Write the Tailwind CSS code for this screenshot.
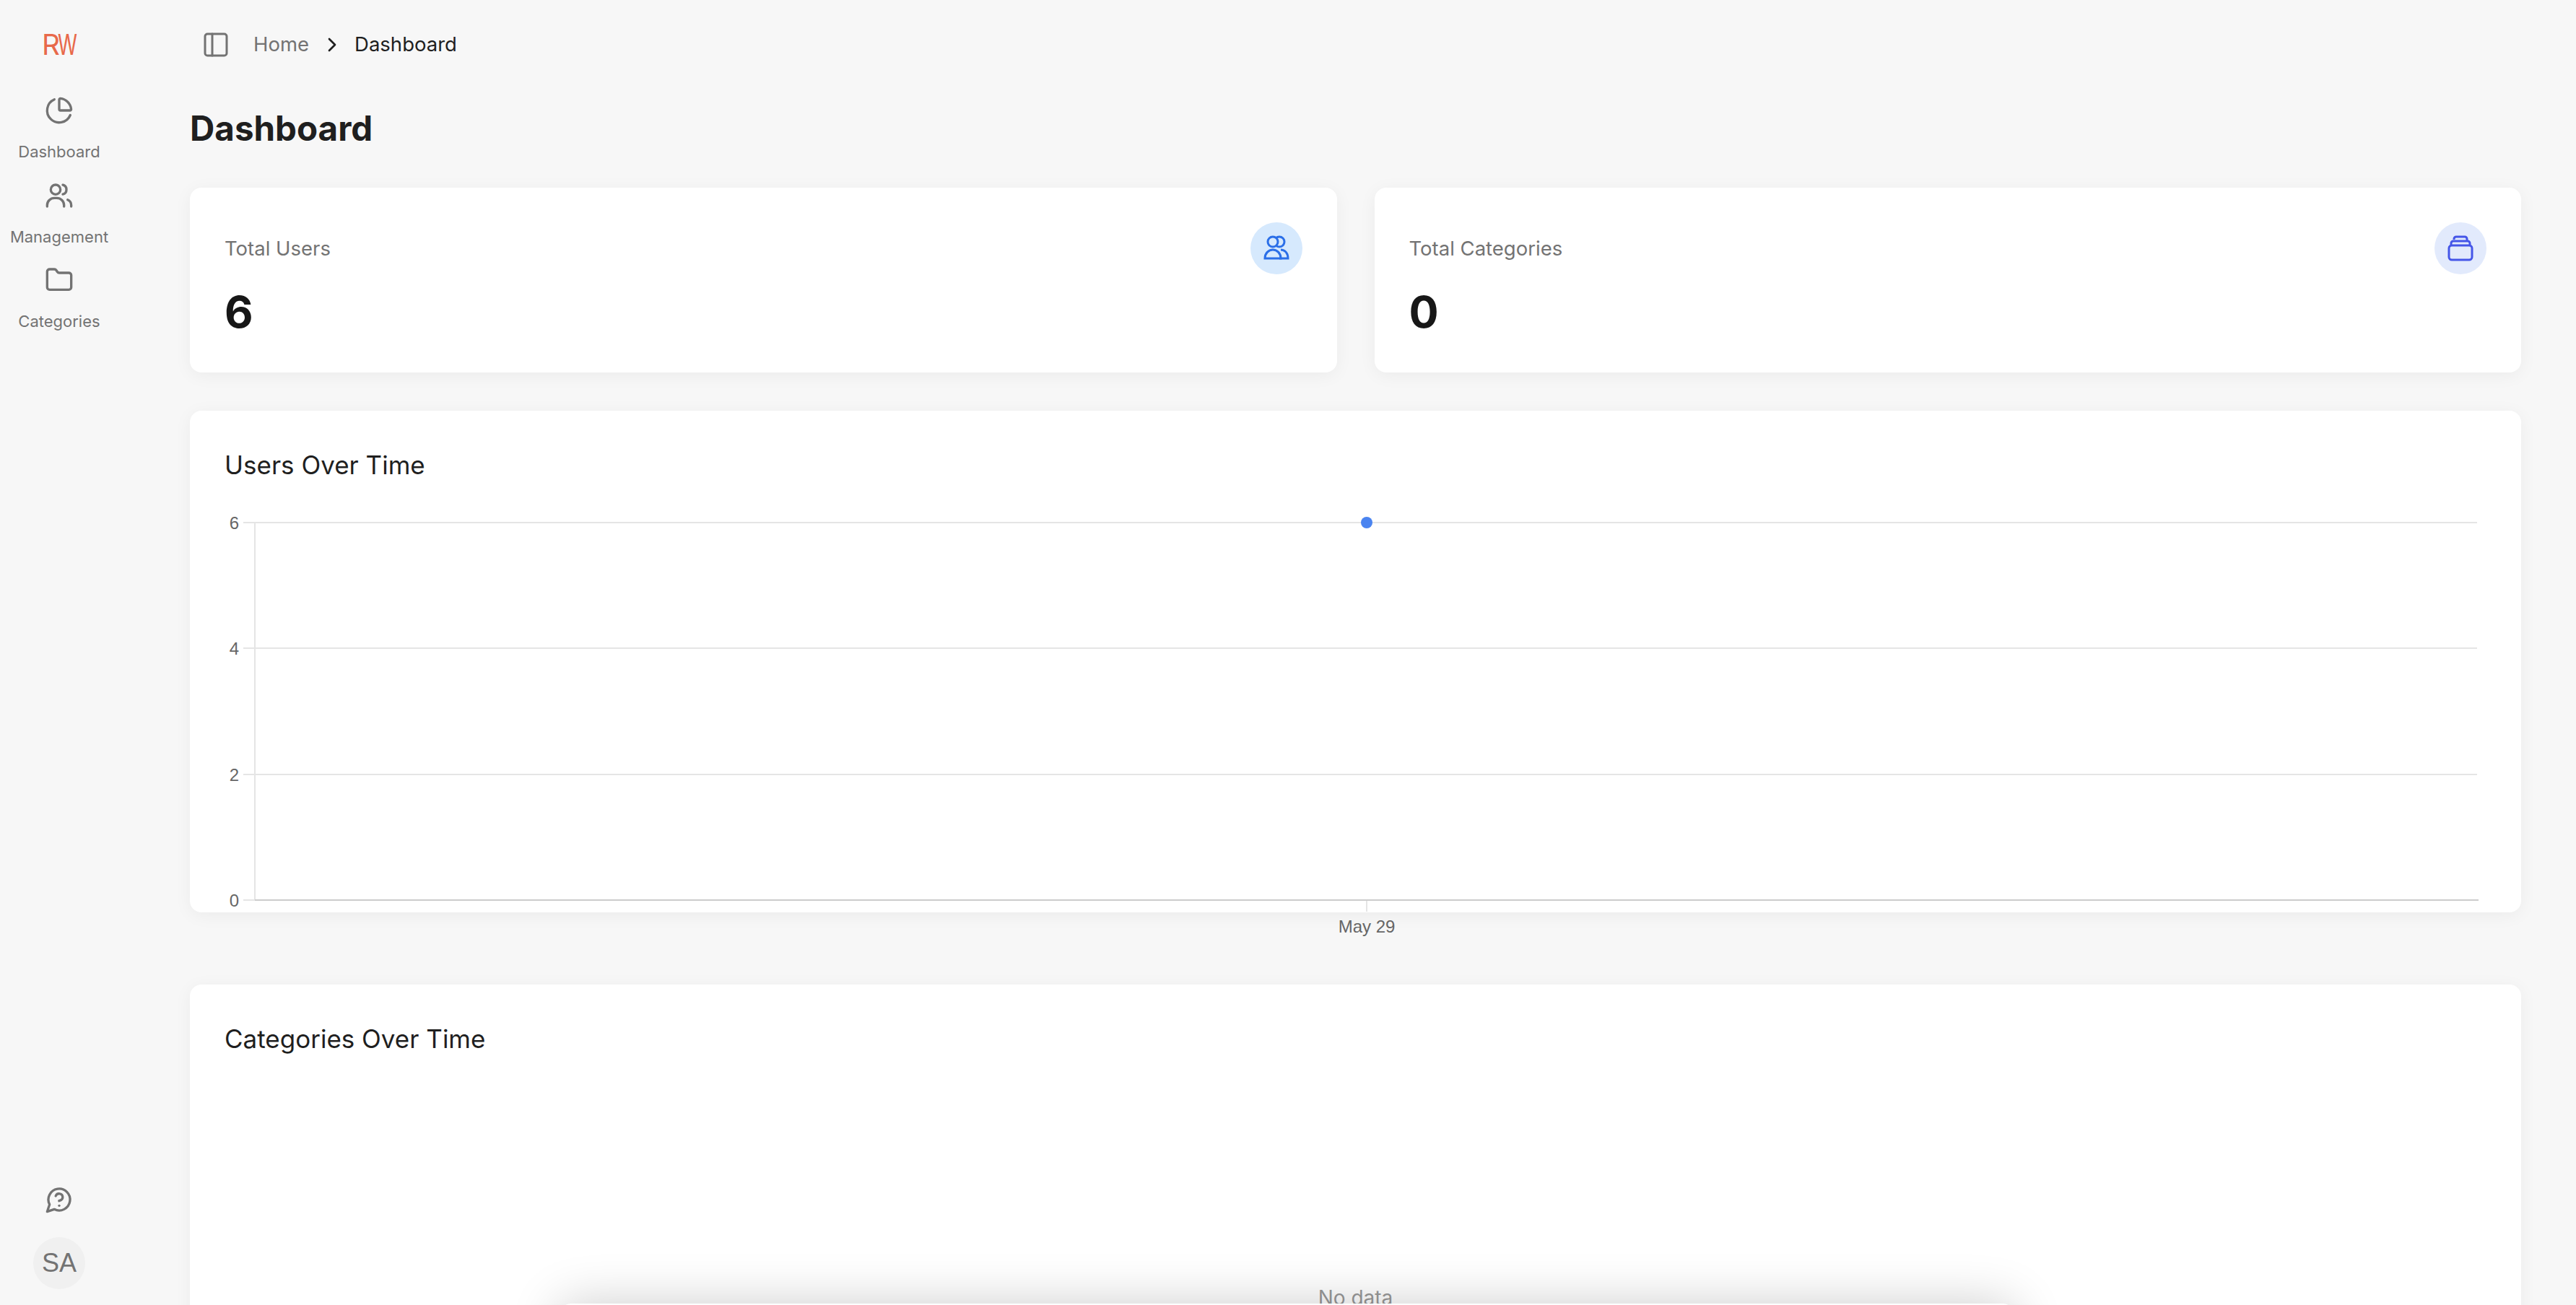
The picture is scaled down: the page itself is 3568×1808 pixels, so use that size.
<!DOCTYPE html>
<html lang="en">
<head>
    <meta charset="UTF-8">
    <meta name="viewport" content="width=device-width, initial-scale=1.0">
    <title>Dashboard</title>
    <script src="https://cdn.jsdelivr.net/npm/@tailwindcss/browser@4"></script>
</head>
<body class="relative flex h-screen overflow-hidden bg-[#f7f7f7] font-[Inter,sans-serif] text-[#1f1f1f]">
    <!-- sidebar -->
    <aside class="flex h-full w-[164px] shrink-0 flex-col items-center pt-[44px] pb-[22px] text-[#737373]">
        <svg class="ml-[2px] h-[34px] w-[50px] overflow-visible" viewBox="0 0 50 34" font-family="Inter, sans-serif" font-size="40" fill="#e8694a"><text x="0" y="32" textLength="25" lengthAdjust="spacingAndGlyphs">R</text><text x="22" y="32" textLength="27" lengthAdjust="spacingAndGlyphs">W</text></svg>
        <nav class="mt-[55px] flex flex-col items-center gap-[28.5px]">
            <a class="flex flex-col items-center gap-[25px]">
                <svg class="h-[40px] w-[40px]" viewBox="0 0 24 24" fill="none" stroke="currentColor" stroke-width="2" stroke-linecap="round" stroke-linejoin="round"><path d="M21 12c.552 0 1.005-.449.95-.998a10 10 0 0 0-8.953-8.951c-.55-.055-.998.398-.998.95v8a1 1 0 0 0 1 1z"/><path d="M21.21 15.89A10 10 0 1 1 8 2.83"/></svg>
                <span class="text-[22px] leading-[24px]">Dashboard</span>
            </a>
            <a class="flex flex-col items-center gap-[25px]">
                <svg class="h-[40px] w-[40px]" viewBox="0 0 24 24" fill="none" stroke="currentColor" stroke-width="2" stroke-linecap="round" stroke-linejoin="round"><circle cx="9" cy="7" r="4"/><path d="M2 21v-1a6 6 0 0 1 6-6h2a6 6 0 0 1 6 6v1"/><path d="M15 3.13a4 4 0 0 1 0 7.75"/><path d="M22 21v-1a5 5 0 0 0-3-4.5"/></svg>
                <span class="text-[22px] leading-[24px]">Management</span>
            </a>
            <a class="flex flex-col items-center gap-[25px]">
                <svg class="h-[40px] w-[40px]" viewBox="0 0 24 24" fill="none" stroke="currentColor" stroke-width="2" stroke-linecap="round" stroke-linejoin="round"><path d="M20 20a2 2 0 0 0 2-2V8a2 2 0 0 0-2-2h-7.9a2 2 0 0 1-1.7-.9l-.8-1.2A2 2 0 0 0 7.9 3H4a2 2 0 0 0-2 2v13a2 2 0 0 0 2 2z"/></svg>
                <span class="text-[22px] leading-[24px]">Categories</span>
            </a>
        </nav>
        <div class="mt-auto flex flex-col items-center gap-[32px]">
            <svg class="h-[40px] w-[40px]" viewBox="0 0 24 24" fill="none" stroke="currentColor" stroke-width="2" stroke-linecap="round" stroke-linejoin="round"><path d="M7.9 20A9 9 0 1 0 4 16.1L2 22z"/><path d="M9.1 9a3 3 0 0 1 5.8 1c0 2-3 3-3 3"/><path d="M12 17h.01"/></svg>
            <div class="flex h-[72px] w-[72px] items-center justify-center rounded-full bg-[#f0f0f0] font-['Liberation_Sans',sans-serif] text-[36px]">SA</div>
        </div>
    </aside>

    <!-- main -->
    <main class="min-w-0 flex-1 pr-[76px] pl-[99px]">
        <header class="flex h-[124px] items-center pl-[16px] text-[27.5px]">
            <svg class="h-[40px] w-[40px] text-[#737373]" viewBox="0 0 24 24" fill="none" stroke="currentColor" stroke-width="1.8" stroke-linecap="round" stroke-linejoin="round"><rect x="3" y="3" width="18" height="18" rx="2"/><path d="M9 3v18"/></svg>
            <span class="ml-[32px] text-[#737373]">Home</span>
            <svg class="mr-[15px] ml-[16px] h-[32px] w-[32px]" viewBox="0 0 24 24" fill="none" stroke="currentColor" stroke-width="2" stroke-linecap="round" stroke-linejoin="round"><path d="m9 18 6-6-6-6"/></svg>
            <span>Dashboard</span>
        </header>
        <h1 class="mt-[25px] text-[47.5px] leading-[58px] font-bold">Dashboard</h1>

        <div class="mt-[53px] grid grid-cols-2 gap-[52px]">
            <div class="flex h-[256px] justify-between rounded-[16px] bg-white p-[48px] shadow-[0_4px_24px_rgba(0,0,0,0.05)]">
                <div class="mt-[18px]">
                    <p class="text-[27.5px] leading-[36px] text-[#737373]">Total Users</p>
                    <p class="mt-[40px] text-[61px] leading-[60px] font-bold text-[#171717]">6</p>
                </div>
                <div class="flex h-[72px] w-[72px] items-center justify-center rounded-full bg-[#d6e9fd] text-[#2b6fe8]">
                    <svg class="h-[36px] w-[36px]" viewBox="0 0 36 36" fill="none" stroke="currentColor" stroke-width="3"><circle cx="22" cy="9" r="7"/><circle cx="13" cy="9" r="7" fill="#d6e9fd"/><path d="M24 20c6 0 10 5 10 12H22"/><path d="M2 32c0-7 5-12 11-12s11 5 11 12z" fill="#d6e9fd"/></svg>
                </div>
            </div>
            <div class="flex h-[256px] justify-between rounded-[16px] bg-white p-[48px] shadow-[0_4px_24px_rgba(0,0,0,0.05)]">
                <div class="mt-[18px]">
                    <p class="text-[27.5px] leading-[36px] text-[#737373]">Total Categories</p>
                    <p class="mt-[40px] text-[61px] leading-[60px] font-bold text-[#171717]">0</p>
                </div>
                <div class="flex h-[72px] w-[72px] items-center justify-center rounded-full bg-[#e2eafc] text-[#4556e8]">
                    <svg class="h-[36px] w-[36px]" viewBox="0 0 36 36" fill="none" stroke="currentColor" stroke-width="3"><path d="M9 6V5a3 3 0 0 1 3-3h12a3 3 0 0 1 3 3v3"/><path d="M5 14v-3a3 3 0 0 1 3-3h20a3 3 0 0 1 3 3v3"/><rect x="2" y="14" width="32" height="20" rx="4"/></svg>
                </div>
            </div>
        </div>

        <section class="mt-[53px] h-[695px] rounded-[16px] bg-white p-[48px] shadow-[0_4px_24px_rgba(0,0,0,0.05)]">
            <h2 class="text-[35px] leading-[54px]">Users Over Time</h2>
            <svg class="-ml-[48px] block overflow-visible" width="3229" height="600" viewBox="263 671 3229 600" font-family="Liberation Sans, sans-serif" font-size="24" fill="#666">
                <g stroke="#e5e5e5" stroke-width="2">
                    <path d="M337 724H3431M337 898H3431M337 1073H3431M337 1247H353M353 724V1247M1893 1247V1263"/>
                </g>
                <path d="M353 1247H3433" stroke="#ccc" stroke-width="2"/>
                <circle cx="1893" cy="724" r="8" fill="#4a84f0"/>
                <g text-anchor="end">
                    <text x="331" y="733">6</text>
                    <text x="331" y="907">4</text>
                    <text x="331" y="1082">2</text>
                    <text x="331" y="1256">0</text>
                </g>
                <text x="1893" y="1292" text-anchor="middle">May 29</text>
            </svg>
        </section>

        <section class="mt-[100px] h-[700px] rounded-[16px] bg-white p-[48px] shadow-[0_4px_24px_rgba(0,0,0,0.05)]">
            <h2 class="text-[35px] leading-[54px]">Categories Over Time</h2>
            <p class="mt-[311px] text-center text-[28px] text-[#999]">No data</p>
        </section>
    </main>

    <!-- dialog just below the fold, only its shadow shows -->
    <div class="absolute top-[1806px] left-[775px] h-[400px] w-[2015px] rounded-[16px] bg-white shadow-[0_0_70px_rgba(0,0,0,0.2)]"></div>
</body>
</html>
